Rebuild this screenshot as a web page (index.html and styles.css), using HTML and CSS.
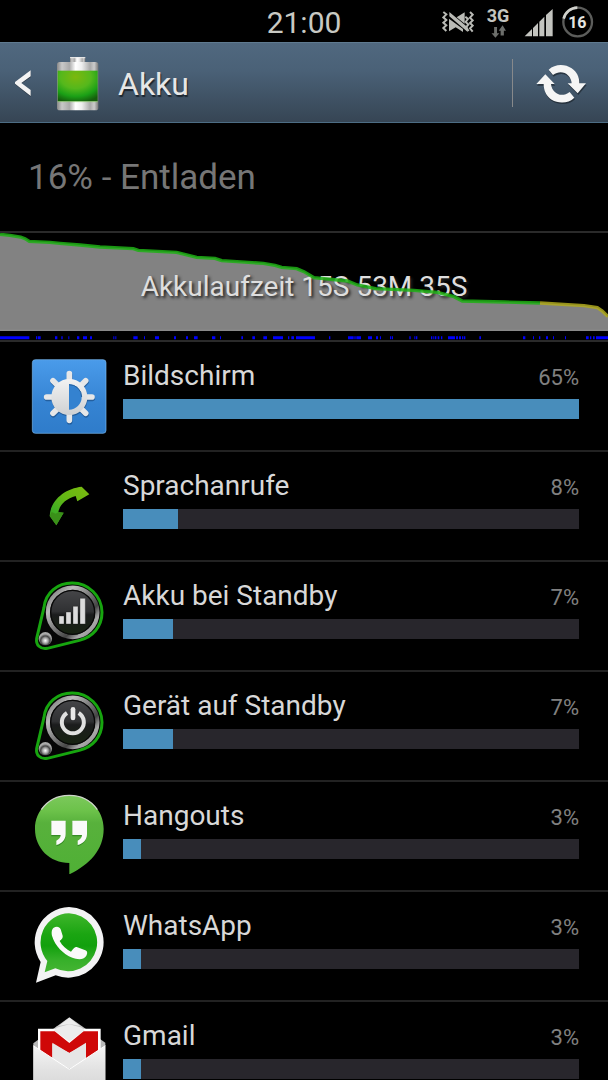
FILE: index.html
```html
<!DOCTYPE html>
<html lang="de">
<head>
<meta charset="utf-8">
<meta name="viewport" content="width=device-width, initial-scale=1">
<title>Akku</title>
<link rel="stylesheet" href="styles.css">
</head>
<body>
<div class="status-bar">
  <time class="clock">21:00</time>
  <div class="indicators">
    <svg class="indicator" viewBox="30 0 102 126" aria-hidden="true">
      <g fill="none" stroke="#b9bab5" stroke-width="6">
        <path d="M40 33l9 7-9 9 9 8-9 8 9 8-9 8 9 9M106 47l8 7-7 9 8 8-7 8 8 11M120 33l8 8-8 9 8 8-8 8 8 8-8 8 8 10"/>
      </g>
      <path fill="#b9bab5" d="M57 53l42 31v9L77 79l-20 12zM58 33l55 46v14L58 46zM80 49l24-15v34z"/>
    </svg>
    <div class="network">
      <span class="network-type">3G</span>
      <svg class="network-arrows" viewBox="0 0 45 40" aria-hidden="true">
        <path fill="#6c6e6b" d="M9 6h9v19h7L13 39 1 25h8zM29 32V18h-6L35 1l11 17h-7v14z"/>
      </svg>
    </div>
    <svg class="indicator" viewBox="276 0 102 126" aria-hidden="true">
      <path fill="#c3c4bf" d="M284 106l22-22v22zM309 81l15-15v40h-15zM328 62l15-15v59h-15zM348 42l20-18v82h-20z"/>
    </svg>
    <svg class="indicator" viewBox="390 0 102 126" role="img" aria-label="Akku 16 %">
      <circle cx="443" cy="63" r="43" fill="none" stroke="#5c5d5b" stroke-width="7"/>
      <path d="M401 53a43 43 0 0 1 41-33" fill="none" stroke="#d0d1cc" stroke-width="8"/>
      <text class="charge" x="442" y="81" text-anchor="middle">16</text>
    </svg>
  </div>
</div>

<header class="action-bar">
  <a class="up" href="#">
    <svg class="chevron" viewBox="42 198 54 96" aria-hidden="true">
      <path d="M92 211v18l-29 19 29 21v18l-47-37v-5z" fill="#141b22" opacity=".6"/>
      <path d="M92 208v18l-28 20 28 21v18l-47-37v-5z" fill="#f4f4f4"/>
    </svg>
    <svg class="battery" viewBox="168 162 132 168" aria-hidden="true">
      <defs>
        <linearGradient id="metal" x1="0" x2="1" y1="0" y2="0">
          <stop offset="0" stop-color="#888"/><stop offset=".12" stop-color="#c9c9c9"/>
          <stop offset=".3" stop-color="#aaa"/><stop offset=".45" stop-color="#fff"/>
          <stop offset=".6" stop-color="#eee"/><stop offset=".8" stop-color="#aaa"/>
          <stop offset=".9" stop-color="#ccc"/><stop offset="1" stop-color="#777"/>
        </linearGradient>
        <radialGradient id="cell" cx=".45" cy=".2" r=".85">
          <stop offset="0" stop-color="#7cb80e"/><stop offset=".45" stop-color="#55b81c"/>
          <stop offset=".75" stop-color="#1ba016"/><stop offset="1" stop-color="#155d0c"/>
        </radialGradient>
      </defs>
      <rect x="210" y="168" width="46" height="20" rx="3" fill="url(#metal)"/>
      <path d="M210 170h46" stroke="#eee" stroke-width="3"/>
      <rect x="171" y="183" width="124" height="145" rx="8" fill="url(#metal)"/>
      <rect x="173" y="209" width="120" height="92" fill="url(#cell)"/>
      <path d="M173 302h120" stroke="#8fd070" stroke-width="2"/>
    </svg>
    <h1 class="title">Akku</h1>
  </a>
  <button class="refresh" type="button" aria-label="Aktualisieren">
    <svg class="refresh-icon" viewBox="312 180 156 132" aria-hidden="true">
      <defs>
        <path id="arrows" d="M353 206C372 188 402 188 422 202C438 213 445 228 445 247H465L440 277 410 247H422C420 220 392 203 366 222ZM430 290C412 308 382 308 362 296C345 285 338 268 338 249H316L343 220 371 249H360C363 277 391 292 416 273Z"/>
      </defs>
      <use href="#arrows" fill="#1c252e" opacity=".7" transform="translate(2 5)"/>
      <use href="#arrows" fill="#f5f5f5"/>
    </svg>
  </button>
</header>

<main class="usage">
  <p class="summary">16% - Entladen</p>

  <section class="history">
    <svg class="chart" viewBox="0 24 1824 321" preserveAspectRatio="none" aria-hidden="true">
      <path fill="#828282" d="M0 28L30 31 62 36 75 41 88 49 150 52 180 55 240 60 300 66 400 71 415 76 530 82 590 97 645 100 665 107 790 115 825 121 845 127 890 131 912 140 942 158 1042 168 1072 180 1127 191 1242 196 1312 202 1362 215 1387 228 1512 231 1620 234 1752 242 1792 248 1807 258 1824 275V317H0z"/>
      <path d="M0 316H1824" stroke="#929292" stroke-width="3"/>
      <path fill="none" stroke="#00f" stroke-width="9" d="M0 338h88M108 338h4M114 338h8M165 338h7M184 338h4M205 338h3M231 338h7M249 338h12M270 338h6M340 338h3M346 338h3M400 338h13M432 338h3M465 338h12M522 338h6M558 338h6M582 338h11M636 338h10M660 338h3M724 338h5M757 338h8M790 338h11M819 338h30M864 338h4M874 338h8M888 338h57M987 338h4M1044 338h17M1063 338h4M1069 338h14M1104 338h12M1128 338h6M1140 338h3M1170 338h4M1176 338h3M1228 338h4M1243 338h3M1248 338h4M1293 338h4M1300 338h3M1305 338h4M1313 338h5M1323 338h4M1344 338h21M1368 338h6M1377 338h6M1386 338h4M1392 338h4M1438 338h5M1569 338h7M1599 338h3M1617 338h4M1638 338h6M1659 338h3M1695 338h3M1758 338h8M1770 338h4M1779 338h5M1788 338h36"/>
    </svg>
    <p class="runtime">Akkulaufzeit 15S 53M 35S</p>
    <svg class="chart" viewBox="0 24 1824 321" preserveAspectRatio="none" aria-hidden="true">
      <g fill="none" stroke-width="10" opacity=".85">
        <path stroke="#1fb015" d="M0 28L30 31 62 36 75 41 88 49 150 52 180 55 240 60 300 66 400 71 415 76 530 82 590 97 645 100 665 107 790 115 825 121 845 127 890 131 912 140 942 158 1042 168 1072 180 1127 191 1242 196 1312 202 1362 215 1387 228 1512 231 1620 234"/>
        <path stroke="#b0aa20" d="M1620 234L1752 242 1792 248 1807 258 1824 275"/>
      </g>
    </svg>
  </section>

  <ul class="apps">
    <li class="app">
      <svg class="app-icon" viewBox="33 12 228 240" aria-hidden="true">
        <defs>
          <linearGradient id="sky" x2="0" y2="1"><stop offset="0" stop-color="#4a9bea"/><stop offset=".6" stop-color="#3583d2"/><stop offset="1" stop-color="#2f7cca"/></linearGradient>
          <linearGradient id="silver" x2="0" y2="1"><stop offset="0" stop-color="#f2f2f2"/><stop offset="1" stop-color="#cfd1d3"/></linearGradient>
        </defs>
        <rect x="37" y="29" width="221" height="221" rx="9" fill="url(#sky)" stroke="#79b9f2" stroke-width="2"/>
        <g stroke="#1d5088" stroke-width="17" stroke-linecap="round" opacity=".7" transform="translate(1 4)">
          <path d="M148 71v140M80 141h136M99 92l98 98M197 92l-98 98"/>
        </g>
        <circle cx="149" cy="145" r="54" fill="#1d5088" opacity=".7"/>
        <g stroke="#e6e7e8" stroke-width="17" stroke-linecap="round">
          <path d="M148 71v140M80 141h136M99 92l98 98M197 92l-98 98"/>
        </g>
        <circle cx="148" cy="141" r="54" fill="url(#silver)"/>
        <path d="M147 103a38 38 0 0 1 0 76z" fill="#3482d0"/>
        <path d="M147 104a37 37 0 0 1 38 37" fill="none" stroke="#23609f" stroke-width="3"/>
      </svg>
      <div class="app-body">
        <div class="app-line"><span class="app-name">Bildschirm</span><span class="app-share">65%</span></div>
        <div class="track"><div class="fill" style="width:100%"></div></div>
      </div>
    </li>
    <li class="app">
      <svg class="app-icon" viewBox="33 12 228 240" aria-hidden="true">
        <defs><linearGradient id="phone" x1="1" y1="0" x2="0" y2="1"><stop offset="0" stop-color="#7cbb10"/><stop offset=".45" stop-color="#65b714"/><stop offset=".75" stop-color="#3fae24"/><stop offset="1" stop-color="#3a9518"/></linearGradient></defs>
        <path fill="url(#phone)" d="M89 168c2-49 48-83 96-88l23 23-36 21-5-16c-28 8-48 25-52 49l16 1-22 38z"/>
        <path fill="#3a9019" d="M89 168l6-12 12 5 9-5 15 2-22 38z"/>
      </svg>
      <div class="app-body">
        <div class="app-line"><span class="app-name">Sprachanrufe</span><span class="app-share">8%</span></div>
        <div class="track"><div class="fill" style="width:12%"></div></div>
      </div>
    </li>
    <li class="app">
      <svg class="app-icon" viewBox="33 12 228 240" aria-hidden="true">
        <defs>
          <linearGradient id="rim" x1="0" y1="0" x2="1" y2="1"><stop offset="0" stop-color="#666"/><stop offset=".25" stop-color="#bbb"/><stop offset=".5" stop-color="#777"/><stop offset=".68" stop-color="#444"/><stop offset=".8" stop-color="#aaa"/><stop offset="1" stop-color="#888"/></linearGradient>
          <linearGradient id="face" x2="0" y2="1"><stop offset="0" stop-color="#48484b"/><stop offset=".48" stop-color="#303133"/><stop offset=".55" stop-color="#1b1c1d"/><stop offset="1" stop-color="#16230f"/></linearGradient>
          <radialGradient id="knob" cy=".65"><stop offset="0" stop-color="#fff"/><stop offset=".45" stop-color="#999"/><stop offset=".7" stop-color="#444"/><stop offset="1" stop-color="#aaa"/></radialGradient>
          <g id="dial">
            <path d="M72 112C77 67 113 39 156 39a89 89 0 0 1 90 88c0 43-28 74-68 84L82 235c-21 4-35-11-32-29z" fill="#050505" stroke="#17a50f" stroke-width="9"/>
            <circle cx="158" cy="127" r="74" fill="url(#face)" stroke="url(#rim)" stroke-width="13"/>
            <circle cx="158" cy="127" r="66" fill="none" stroke="#080808" stroke-width="4"/>
            <circle cx="76" cy="206" r="20" fill="url(#knob)"/>
          </g>
        </defs>
        <use href="#dial"/>
        <path fill="#dcdcdc" stroke="#111" stroke-width="1" d="M117 138h15v24h-15zM138 126h15v36h-15zM159 109h15v53h-15zM180 85h16v77h-16z"/>
      </svg>
      <div class="app-body">
        <div class="app-line"><span class="app-name">Akku bei Standby</span><span class="app-share">7%</span></div>
        <div class="track"><div class="fill" style="width:11%"></div></div>
      </div>
    </li>
    <li class="app">
      <svg class="app-icon" viewBox="33 12 228 240" aria-hidden="true">
        <use href="#dial"/>
        <path d="M141 99a33 33 0 1 0 35 0" fill="none" stroke="#e0e0e0" stroke-width="12"/>
        <path d="M159 88v26" stroke="#e8e8e8" stroke-width="14" stroke-linecap="round"/>
      </svg>
      <div class="app-body">
        <div class="app-line"><span class="app-name">Gerät auf Standby</span><span class="app-share">7%</span></div>
        <div class="track"><div class="fill" style="width:11%"></div></div>
      </div>
    </li>
    <li class="app">
      <svg class="app-icon" viewBox="33 27 228 240" aria-hidden="true">
        <defs><linearGradient id="leaf" x2="0" y2="1"><stop offset="0" stop-color="#7cc95c"/><stop offset=".2" stop-color="#6cc24a"/><stop offset=".35" stop-color="#58b13c"/><stop offset="1" stop-color="#4fb035"/></linearGradient></defs>
        <path fill="url(#leaf)" d="M148 30c58 0 103 44 103 102 0 63-43 107-103 136v-34C89 234 45 189 45 132 45 75 90 30 148 30z"/>
        <path fill="none" stroke="#cfd3cc" stroke-width="4" d="M64 74c39-56 127-58 168 0"/>
        <path d="M94 111h43v40c0 18-12 29-27 33v-13c8-4 13-9 13-17H94zM157 111h43v40c0 18-12 29-27 33v-13c8-4 13-9 13-17h-29z" fill="#358c25"/>
        <path d="M94 107h43v40c0 18-12 29-28 33v-13c8-4 13-9 13-17H94zM157 107h44v40c0 18-12 29-28 33v-13c8-4 13-9 13-17h-29z" fill="#fafafa"/>
      </svg>
      <div class="app-body">
        <div class="app-line"><span class="app-name">Hangouts</span><span class="app-share">3%</span></div>
        <div class="track"><div class="fill" style="width:4%"></div></div>
      </div>
    </li>
    <li class="app">
      <svg class="app-icon" viewBox="33 27 228 240" aria-hidden="true">
        <defs><linearGradient id="bubble" x2="0" y2="1"><stop offset="0" stop-color="#3fb62b"/><stop offset=".35" stop-color="#1ba512"/><stop offset=".55" stop-color="#12a00d"/><stop offset=".8" stop-color="#37b02a"/><stop offset="1" stop-color="#45b533"/></linearGradient></defs>
        <path fill="#f3f3f4" d="M147 36a106 106 0 1 1-40 205L48 263l14-62A106 106 0 0 1 147 36z"/>
        <path fill="url(#bubble)" d="M147 55a87 87 0 1 1-41 165l-32 12 8-34A87 87 0 0 1 147 55z"/>
        <path fill="#fafafa" d="M101 98c9-5 18-3 21 5l6 19c1 5-1 9-9 16 8 15 20 25 34 32 7-9 12-15 17-14l26 10c8 3 6 12 2 18-8 12-28 9-41 4-28-11-52-37-60-63-3-10-3-21 4-27z"/>
      </svg>
      <div class="app-body">
        <div class="app-line"><span class="app-name">WhatsApp</span><span class="app-share">3%</span></div>
        <div class="track"><div class="fill" style="width:4%"></div></div>
      </div>
    </li>
    <li class="app">
      <svg class="app-icon" viewBox="33 42 228 240" aria-hidden="true">
        <defs><linearGradient id="paper" x2="0" y2="1"><stop offset="0" stop-color="#f5f5f5"/><stop offset=".5" stop-color="#e2e2e2"/><stop offset="1" stop-color="#d4d4d4"/></linearGradient></defs>
        <path d="M148 52l108 76v140H40V130z" fill="#b8b8b8"/>
        <path d="M105 85h86l-43-32z" fill="#d9d9d9"/>
        <path d="M54 86h188v100H54z" fill="#fff"/>
        <path d="M148 53l46 38-46 34-46-34z" fill="#ececec"/>
        <path d="M106 84l42-11 42 11-5-5-37-7-37 7z" fill="#c4c4c4"/>
        <path d="M97 132l51 47 50-47v60H97z" fill="#dcdcdc"/>
        <path d="M61 94h43l44 35 43-35h43v92h-36v-54l-50 27-51-27v54H61z" fill="#cf0808"/>
        <path d="M97 128l51 31 50-31v52l-50 26-51-26z" fill="#e6e6e6"/>
        <path d="M40 137l108 71 108-71v145H40z" fill="url(#paper)"/>
        <path d="M40 137l108 71 108-71" fill="none" stroke="#fff" stroke-width="3"/>
      </svg>
      <div class="app-body">
        <div class="app-line"><span class="app-name">Gmail</span><span class="app-share">3%</span></div>
        <div class="track"><div class="fill" style="width:4%"></div></div>
      </div>
    </li>
  </ul>
</main>
</body>
</html>
```

FILE: styles.css
```css
* {
  box-sizing: border-box;
}

body {
  display: flex;
  flex-direction: column;
  height: 100vh;
  margin: 0;
  overflow: hidden;
  background: #000;
  color: #d8d8d8;
  font-family: Roboto, "Noto Sans", sans-serif;
}

h1,
p,
ul {
  margin: 0;
  padding: 0;
  font-weight: 400;
}

.status-bar {
  display: grid;
  grid-template-columns: 1fr auto 1fr;
  align-items: center;
  flex: none;
  height: 42px;
  padding: 0 14px;
}

.clock {
  grid-column: 2;
  color: #c8c9c3;
  font-size: 30px;
  line-height: 42px;
  padding-top: 2px;
}

.indicators {
  display: flex;
  justify-content: flex-end;
  gap: 4px;
}

.indicator {
  width: 34px;
  height: 42px;
}

.network {
  display: flex;
  flex-direction: column;
  align-items: center;
  width: 40px;
  padding-top: 6px;
}

.network-type {
  color: #c3c4bf;
  font-size: 18px;
  font-weight: 700;
  line-height: 18px;
}

.network-arrows {
  width: 15px;
  height: 13px;
}

.charge {
  fill: #e4e4e0;
  font-size: 48px;
  font-weight: 700;
}

.action-bar {
  display: flex;
  align-items: center;
  justify-content: space-between;
  flex: none;
  height: 81px;
  border-top: 1px solid #5f7a90;
  border-bottom: 1px solid #4d6d84;
  background: linear-gradient(#50687f, #4a6177 35%, #364554);
}

.up {
  display: flex;
  align-items: center;
  padding-left: 14px;
  color: #e6e6e6;
  text-decoration: none;
}

.chevron {
  width: 18px;
  height: 32px;
}

.battery {
  width: 44px;
  height: 56px;
  margin: 0 18px 0 24px;
}

.title {
  padding-top: 2px;
  font-size: 32px;
  line-height: 40px;
  text-shadow: 1px 2px 1px #1c252e;
}

.refresh {
  display: flex;
  align-items: center;
  justify-content: center;
  width: 96px;
  height: 48px;
  padding: 0;
  border: 0;
  border-left: 1px solid #87898b;
  background: none;
}

.refresh-icon {
  width: 52px;
  height: 44px;
}

.usage {
  flex: 1;
  min-height: 0;
  overflow: hidden;
}

.summary {
  height: 110px;
  padding-left: 28px;
  border-bottom: 2px solid #2a2a2a;
  color: #767676;
  font-size: 35px;
  line-height: 110px;
}

.history {
  display: grid;
  border-bottom: 2px solid #2a2a2a;
}

.history > * {
  grid-area: 1 / 1;
}

.chart {
  width: 100%;
  height: 107px;
}

.runtime {
  color: #dedede;
  font-size: 28px;
  line-height: 107px;
  text-align: center;
  text-shadow: 2px 2px 3px #222;
}

.apps {
  list-style: none;
}

.app {
  display: flex;
  gap: 16px;
  height: 110px;
  padding: 12px 29px 0 31px;
  border-bottom: 2px solid #222;
}

.app-icon {
  flex: none;
  width: 76px;
  height: 80px;
}

.app-body {
  flex: 1;
  padding-top: 5px;
}

.app-line {
  display: flex;
  align-items: baseline;
  justify-content: space-between;
  height: 40px;
  line-height: 34px;
}

.app-name {
  font-size: 28px;
}

.app-share {
  color: #808080;
  font-size: 22px;
}

.track {
  height: 20px;
  background: #28262c;
}

.fill {
  height: 100%;
  background: #488dbb;
}
```
